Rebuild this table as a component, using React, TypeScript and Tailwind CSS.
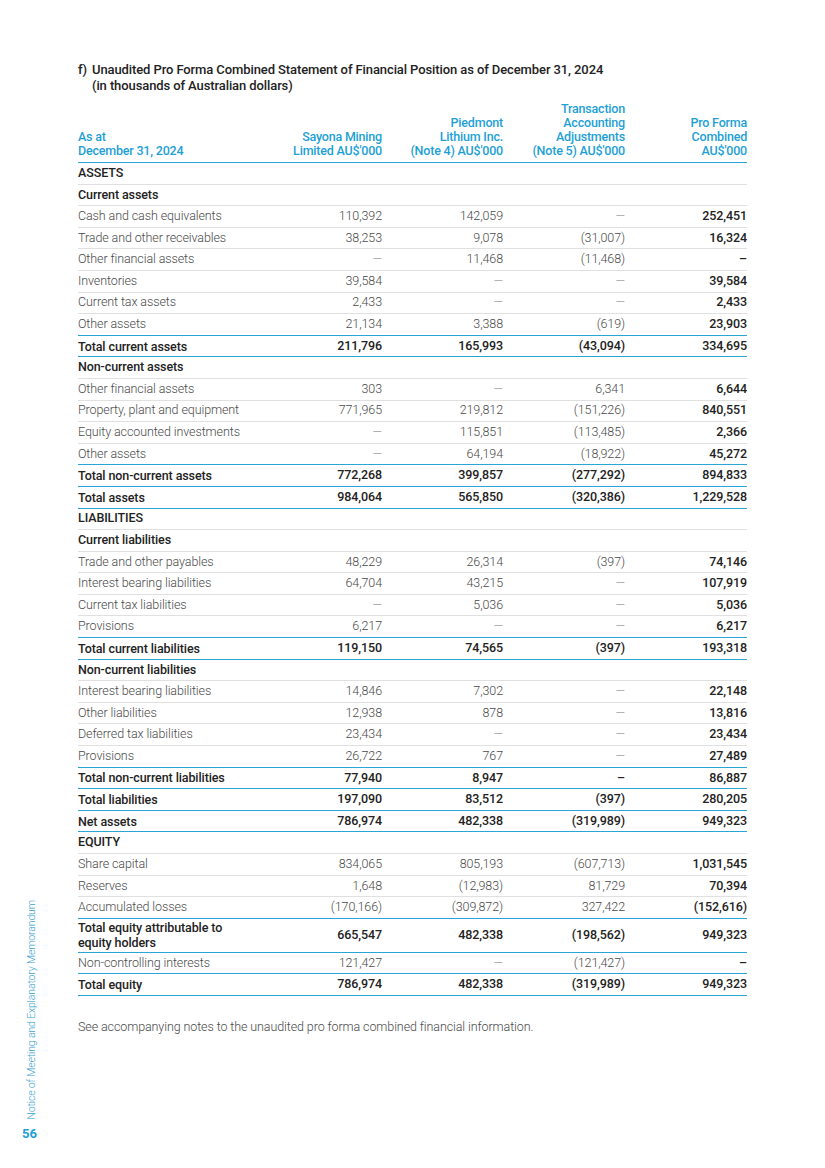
import React from 'react'

type Row = {
  label: string
  v?: string[]
  kind: 'section' | 'sub' | 'line' | 'total'
  tall?: boolean
}

const D = '–'

const rows: Row[] = [
  { label: 'ASSETS', kind: 'section' },
  { label: 'Current assets', kind: 'sub' },
  { label: 'Cash and cash equivalents', kind: 'line', v: ['110,392', '142,059', D, '252,451'] },
  { label: 'Trade and other receivables', kind: 'line', v: ['38,253', '9,078', '(31,007)', '16,324'] },
  { label: 'Other financial assets', kind: 'line', v: [D, '11,468', '(11,468)', D] },
  { label: 'Inventories', kind: 'line', v: ['39,584', D, D, '39,584'] },
  { label: 'Current tax assets', kind: 'line', v: ['2,433', D, D, '2,433'] },
  { label: 'Other assets', kind: 'line', v: ['21,134', '3,388', '(619)', '23,903'] },
  { label: 'Total current assets', kind: 'total', v: ['211,796', '165,993', '(43,094)', '334,695'] },
  { label: 'Non-current assets', kind: 'sub' },
  { label: 'Other financial assets', kind: 'line', v: ['303', D, '6,341', '6,644'] },
  { label: 'Property, plant and equipment', kind: 'line', v: ['771,965', '219,812', '(151,226)', '840,551'] },
  { label: 'Equity accounted investments', kind: 'line', v: [D, '115,851', '(113,485)', '2,366'] },
  { label: 'Other assets', kind: 'line', v: [D, '64,194', '(18,922)', '45,272'] },
  { label: 'Total non-current assets', kind: 'total', v: ['772,268', '399,857', '(277,292)', '894,833'] },
  { label: 'Total assets', kind: 'total', v: ['984,064', '565,850', '(320,386)', '1,229,528'] },
  { label: 'LIABILITIES', kind: 'section' },
  { label: 'Current liabilities', kind: 'sub' },
  { label: 'Trade and other payables', kind: 'line', v: ['48,229', '26,314', '(397)', '74,146'] },
  { label: 'Interest bearing liabilities', kind: 'line', v: ['64,704', '43,215', D, '107,919'] },
  { label: 'Current tax liabilities', kind: 'line', v: [D, '5,036', D, '5,036'] },
  { label: 'Provisions', kind: 'line', v: ['6,217', D, D, '6,217'] },
  { label: 'Total current liabilities', kind: 'total', v: ['119,150', '74,565', '(397)', '193,318'] },
  { label: 'Non-current liabilities', kind: 'sub' },
  { label: 'Interest bearing liabilities', kind: 'line', v: ['14,846', '7,302', D, '22,148'] },
  { label: 'Other liabilities', kind: 'line', v: ['12,938', '878', D, '13,816'] },
  { label: 'Deferred tax liabilities', kind: 'line', v: ['23,434', D, D, '23,434'] },
  { label: 'Provisions', kind: 'line', v: ['26,722', '767', D, '27,489'] },
  { label: 'Total non-current liabilities', kind: 'total', v: ['77,940', '8,947', D, '86,887'] },
  { label: 'Total liabilities', kind: 'total', v: ['197,090', '83,512', '(397)', '280,205'] },
  { label: 'Net assets', kind: 'total', v: ['786,974', '482,338', '(319,989)', '949,323'] },
  { label: 'EQUITY', kind: 'section' },
  { label: 'Share capital', kind: 'line', v: ['834,065', '805,193', '(607,713)', '1,031,545'] },
  { label: 'Reserves', kind: 'line', v: ['1,648', '(12,983)', '81,729', '70,394'] },
  { label: 'Accumulated losses', kind: 'line', v: ['(170,166)', '(309,872)', '327,422', '(152,616)'] },
  { label: 'Total equity attributable to equity holders', kind: 'total', tall: true, v: ['665,547', '482,338', '(198,562)', '949,323'] },
  { label: 'Non-controlling interests', kind: 'line', v: ['121,427', D, '(121,427)', D] },
  { label: 'Total equity', kind: 'total', v: ['786,974', '482,338', '(319,989)', '949,323'] },
]

const grid = 'grid grid-cols-[184px_120px_121px_122px_122px]'

export default function App() {
  return (
    <div className="relative w-[825px] h-[1168px] bg-white text-[#222] font-['Roboto',sans-serif]">
      {/* side caption */}
      <div className="absolute left-[25px] top-[898px] h-[224px] w-[14px] flex items-center justify-center">
        <span className="whitespace-nowrap -rotate-90 text-[10.5px] tracking-[-0.15px] text-[#3aa3d2] font-light">
          Notice of Meeting and Explanatory Memorandum
        </span>
      </div>
      <div className="absolute left-[22px] top-[1124px] text-[13px] font-bold text-[#1e9fd6]">56</div>

      <div className="pl-[78px] pr-[78px] pt-[62px]">
        <div className="flex text-[13px] leading-[16px] font-medium tracking-[-0.1px] text-[#222]">
          <span className="w-[14px]">f)</span>
          <div>
            <div>Unaudited Pro Forma Combined Statement of Financial Position as of December 31, 2024</div>
            <div>(in thousands of Australian dollars)</div>
          </div>
        </div>

        <div className={`${grid} mt-[8px] items-end text-[12.5px] leading-[14px] font-medium tracking-[-0.2px] text-[#1e9fd6] border-b border-[#2aa6d6] pb-[4px]`}>
          <div>As at<br />December 31, 2024</div>
          <div className="text-right">Sayona Mining<br />Limited AU$'000</div>
          <div className="text-right">Piedmont<br />Lithium Inc.<br />(Note 4) AU$'000</div>
          <div className="text-right">Transaction<br />Accounting<br />Adjustments<br />(Note 5) AU$'000</div>
          <div className="text-right">Pro Forma<br />Combined<br />AU$'000</div>
        </div>

        <div className="text-[12.5px] tracking-[-0.1px]">
          {rows.map((r, i) => {
            const next = rows[i + 1]
            const blue = r.kind === 'total' || (next && next.kind === 'total')
            const border = blue ? 'border-[#2aa6d6]' : 'border-[#e0e0e0]'
            const h = r.tall ? 'h-[34px]' : 'h-[21.6px]'
            if (r.kind === 'section' || r.kind === 'sub') {
              return (
                <div key={i} className={`${h} flex items-center border-b ${border} font-medium text-[#222]`}>
                  {r.label}
                </div>
              )
            }
            const isTotal = r.kind === 'total'
            return (
              <div key={i} className={`${grid} ${h} items-center border-b ${border}`}>
                <div className={isTotal ? 'font-medium text-[#222] leading-[15px] pr-[20px]' : 'font-light text-[#4a4a4a]'}>
                  {r.label}
                </div>
                {r.v!.map((v, j) => {
                  const bold = isTotal || j === 3
                  const dash = v === D
                  let cls = bold ? 'font-medium text-[#222]' : 'font-light text-[#4a4a4a]'
                  if (dash && !bold) cls = 'font-light text-[#777]'
                  return (
                    <div key={j} className={`text-right ${cls}`}>{dash && !bold ? '—' : v}</div>
                  )
                })}
              </div>
            )
          })}
        </div>

        <p className="mt-[22px] text-[12.5px] font-light tracking-[-0.1px] text-[#4a4a4a]">
          See accompanying notes to the unaudited pro forma combined financial information.
        </p>
      </div>
    </div>
  )
}
